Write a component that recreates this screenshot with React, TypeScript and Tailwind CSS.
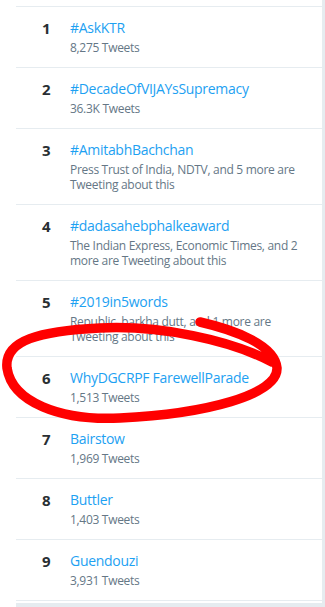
import React from "react";

type Trend = { n: number; title: string; sub: string[] };

const trends: Trend[] = [
  { n: 1, title: "#AskKTR", sub: ["8,275 Tweets"] },
  { n: 2, title: "#DecadeOfVIJAYsSupremacy", sub: ["36.3K Tweets"] },
  { n: 3, title: "#AmitabhBachchan", sub: ["Press Trust of India, NDTV, and 5 more are", "Tweeting about this"] },
  { n: 4, title: "#dadasahebphalkeaward", sub: ["The Indian Express, Economic Times, and 2", "more are Tweeting about this"] },
  { n: 5, title: "#2019in5words", sub: ["Republic, barkha dutt, and 1 more are", "Tweeting about this"] },
  { n: 6, title: "WhyDGCRPF FarewellParade", sub: ["1,513 Tweets"] },
  { n: 7, title: "Bairstow", sub: ["1,969 Tweets"] },
  { n: 8, title: "Buttler", sub: ["1,403 Tweets"] },
  { n: 9, title: "Guendouzi", sub: ["3,931 Tweets"] },
];

export default function App() {
  return (
    <div
      className="relative w-[325px] h-[607px] overflow-hidden bg-white flex"
      style={{ fontFamily: '"Open Sans", "Noto Sans", sans-serif' }}
    >
      <div className="w-[322px] flex flex-col pt-[6px]">
        <div className="ml-4 flex flex-col">
          {trends.map((t, i) => (
            <div
              key={t.n}
              className={
                "flex border-t border-[#e6ecf0] pt-[11px] pb-[12px] " +
                (i === trends.length - 1 ? "border-b" : "")
              }
            >
              <div className="w-[54px] pl-[26px] text-[15px] leading-[20px] font-bold text-[#292f33]">
                {t.n}
              </div>
              <div className="flex flex-col">
                <div className="text-[14px] leading-[20px] text-[#1da1f2] tracking-[-0.3px]">{t.title}</div>
                <div className="mt-[2px] text-[12px] leading-[15px] text-[#657786] tracking-[-0.3px]">
                  {t.sub.map((s, j) => (
                    <div key={j}>{s}</div>
                  ))}
                </div>
              </div>
            </div>
          ))}
        </div>
        <div className="ml-4 mt-[2px] h-[10px] bg-[#e6ecf0]" />
      </div>
      <div className="w-[3px] bg-[#e6ecf0]" />
      <svg
        className="absolute left-0 top-0 pointer-events-none"
        width="325"
        height="607"
        viewBox="0 0 325 607"
      >
        <path
          d="M 200 322 C 235 330, 275 345, 277 368 C 278 395, 205 414, 120 418 C 60 421, 12 402, 7 368 C 4 340, 40 331, 100 328 C 160 325, 230 340, 272 362"
          fill="none"
          stroke="#ff0000"
          strokeWidth="9.5"
          strokeLinecap="round"
          strokeLinejoin="round"
        />
      </svg>
    </div>
  );
}
